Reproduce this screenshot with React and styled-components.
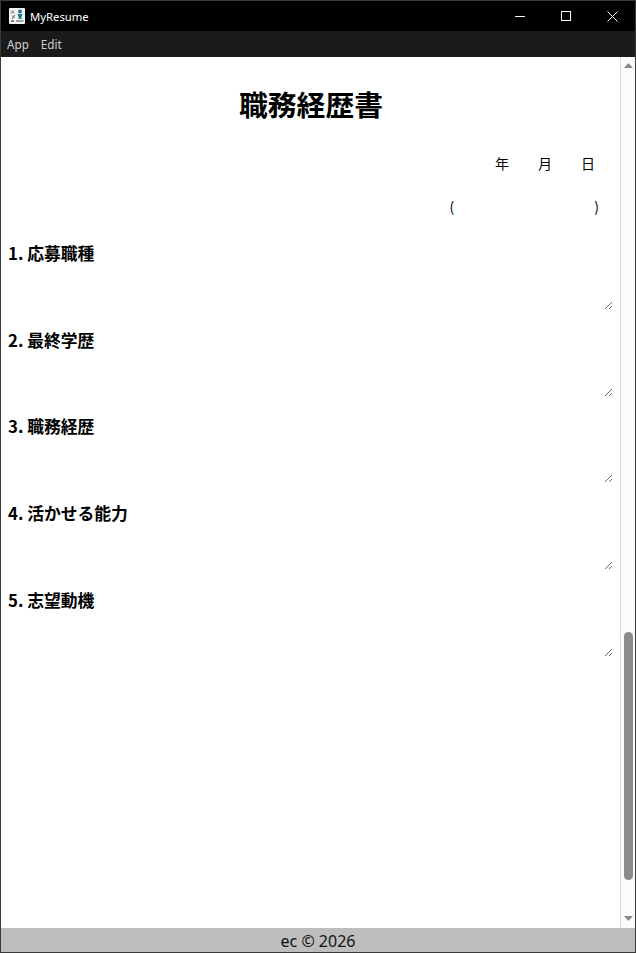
import React from 'react';
import styled, { createGlobalStyle } from 'styled-components';

const GlobalStyle = createGlobalStyle`
  html, body {
    margin: 0;
    padding: 0;
    height: 100%;
    overflow: hidden;
    background: #fff;
  }
  * {
    box-sizing: border-box;
  }
`;

const sections = ['1. 応募職種', '2. 最終学歴', '3. 職務経歴', '4. 活かせる能力', '5. 志望動機'];

const AppIcon = () => (
  <svg width="16" height="16" viewBox="0 0 16 16">
    <rect x="0" y="0" width="16" height="16" rx="1" fill="#f4f4f4" />
    <path d="M2 2.5l3 3M5 2.5l-3 3M3 7.5l2.5 2.5M6 7l-3 4" stroke="#666" strokeWidth="1" fill="none" />
    <circle cx="11" cy="3.5" r="2" fill="#1f7a94" />
    <path d="M8.5 6h5l-1 3v2h-3V9z" fill="#1f7a94" />
    <rect x="7" y="12" width="7.5" height="2" fill="#a0a0a0" />
    <rect x="2" y="12" width="3" height="2" fill="#888" />
  </svg>
);

const App = () => {
  return (
    <Window>
      <GlobalStyle />
      {/* title bar */}
      <TitleBar>
        <AppIcon />
        <AppName>MyResume</AppName>
        <WindowButtons>
          <WindowButton>
            <svg width="10" height="10" viewBox="0 0 10 10">
              <path d="M0 5.5h10" stroke="#fff" strokeWidth="1" />
            </svg>
          </WindowButton>
          <WindowButton>
            <svg width="10" height="10" viewBox="0 0 10 10">
              <rect x="0.5" y="0.5" width="9" height="9" fill="none" stroke="#fff" strokeWidth="1" />
            </svg>
          </WindowButton>
          <WindowButton>
            <svg width="11" height="11" viewBox="0 0 11 11">
              <path d="M0.5 0.5l10 10M10.5 0.5l-10 10" stroke="#fff" strokeWidth="1" />
            </svg>
          </WindowButton>
        </WindowButtons>
      </TitleBar>

      {/* menu */}
      <MenuBar>
        <MenuItem>App</MenuItem>
        <MenuItem>Edit</MenuItem>
      </MenuBar>

      <Body>
        <Page>
          <Title>職務経歴書</Title>
          <DateRow>
            <DateField />
            <DateLabel>年</DateLabel>
            <DateField />
            <DateLabel>月</DateLabel>
            <DateField />
            <DateLabel>日</DateLabel>
          </DateRow>
          <NameRow>
            <span>(</span>
            <NameField />
            <span>)</span>
          </NameRow>
          {sections.map((label) => (
            <Section key={label}>
              <SectionLabel>{label}</SectionLabel>
              <SectionText />
            </Section>
          ))}
        </Page>

        {/* scrollbar */}
        <ScrollBar>
          <ScrollArrow>
            <svg width="9" height="5" viewBox="0 0 9 5">
              <path d="M4.5 0L9 5H0z" fill="#8a8a8a" />
            </svg>
          </ScrollArrow>
          <ScrollTrack>
            <ScrollThumb />
          </ScrollTrack>
          <ScrollArrow>
            <svg width="9" height="5" viewBox="0 0 9 5">
              <path d="M0 0h9L4.5 5z" fill="#8a8a8a" />
            </svg>
          </ScrollArrow>
        </ScrollBar>
      </Body>

      <Footer>ec © 2026</Footer>
    </Window>
  );
};

const Window = styled.div`
  display: flex;
  flex-direction: column;
  width: 636px;
  height: 953px;
  border: 1px solid #3a3a3a;
  font-family: 'Noto Sans CJK JP', 'Noto Sans', sans-serif;
`;

const TitleBar = styled.div`
  display: flex;
  align-items: center;
  flex: 0 0 30px;
  padding-left: 8px;
  background-color: #000;
`;

const AppName = styled.span`
  margin-left: 5px;
  font-family: 'Noto Sans', sans-serif;
  font-size: 11.3px;
  color: #fff;
`;

const WindowButtons = styled.div`
  display: flex;
  margin-left: auto;
  height: 100%;
`;

const WindowButton = styled.div`
  display: flex;
  align-items: center;
  justify-content: center;
  width: 46px;
`;

const MenuBar = styled.div`
  display: flex;
  align-items: center;
  flex: 0 0 26px;
  gap: 12px;
  padding-left: 6px;
  background-color: #1b1b1b;
`;

const MenuItem = styled.span`
  font-family: 'Noto Sans', sans-serif;
  font-size: 11.7px;
  color: #cfcfcf;
`;

const Body = styled.div`
  display: flex;
  flex: 1;
  min-height: 0;
`;

const Page = styled.div`
  flex: 1;
  padding: 0 6px 0 7px;
  background-color: #fff;
  color: #000;
`;

const Title = styled.h1`
  margin: 26px 0 0;
  font-size: 28.8px;
  line-height: 42px;
  font-weight: 700;
  text-align: center;
`;

const DateRow = styled.div`
  display: flex;
  align-items: center;
  justify-content: flex-end;
  height: 20px;
  margin-top: 28px;
  padding-right: 19px;
  font-size: 14px;
`;

const DateField = styled.input`
  width: 29px;
  padding: 0;
  border: none;
  outline: none;
  background: transparent;
`;

const DateLabel = styled.span`
  line-height: 20px;
`;

const NameRow = styled.div`
  display: flex;
  align-items: center;
  justify-content: flex-end;
  height: 20px;
  margin-top: 23px;
  padding-right: 15px;
  font-size: 14px;
`;

const NameField = styled.input`
  width: 140px;
  padding: 0;
  border: none;
  outline: none;
  background: transparent;
`;

const Section = styled.section`
  height: 86.7px;
  &:first-of-type {
    margin-top: 25px;
  }
`;

const SectionLabel = styled.div`
  font-size: 16.8px;
  line-height: 24px;
  font-weight: 700;
`;

const SectionText = styled.textarea`
  display: block;
  width: 605px;
  height: 45px;
  padding: 0;
  border: none;
  outline: none;
  background: transparent;
`;

const ScrollBar = styled.div`
  display: flex;
  flex-direction: column;
  flex: 0 0 15px;
  padding-bottom: 2px;
  border-left: 1px solid #dcdcdc;
  background-color: #fcfcfc;
`;

const ScrollArrow = styled.div`
  display: flex;
  align-items: center;
  justify-content: center;
  flex: 0 0 16px;
`;

const ScrollTrack = styled.div`
  display: flex;
  flex: 1;
  flex-direction: column;
  justify-content: flex-end;
  align-items: center;
  padding-bottom: 30px;
`;

const ScrollThumb = styled.div`
  width: 9px;
  height: 248px;
  border-radius: 5px;
  background-color: #8b8b8b;
`;

const Footer = styled.div`
  flex: 0 0 24px;
  min-height: 0;
  overflow: hidden;
  background-color: #bdbdbd;
  color: #111;
  font-family: 'Noto Sans', sans-serif;
  font-size: 16px;
  line-height: 26px;
  text-align: center;
`;

export default App;
